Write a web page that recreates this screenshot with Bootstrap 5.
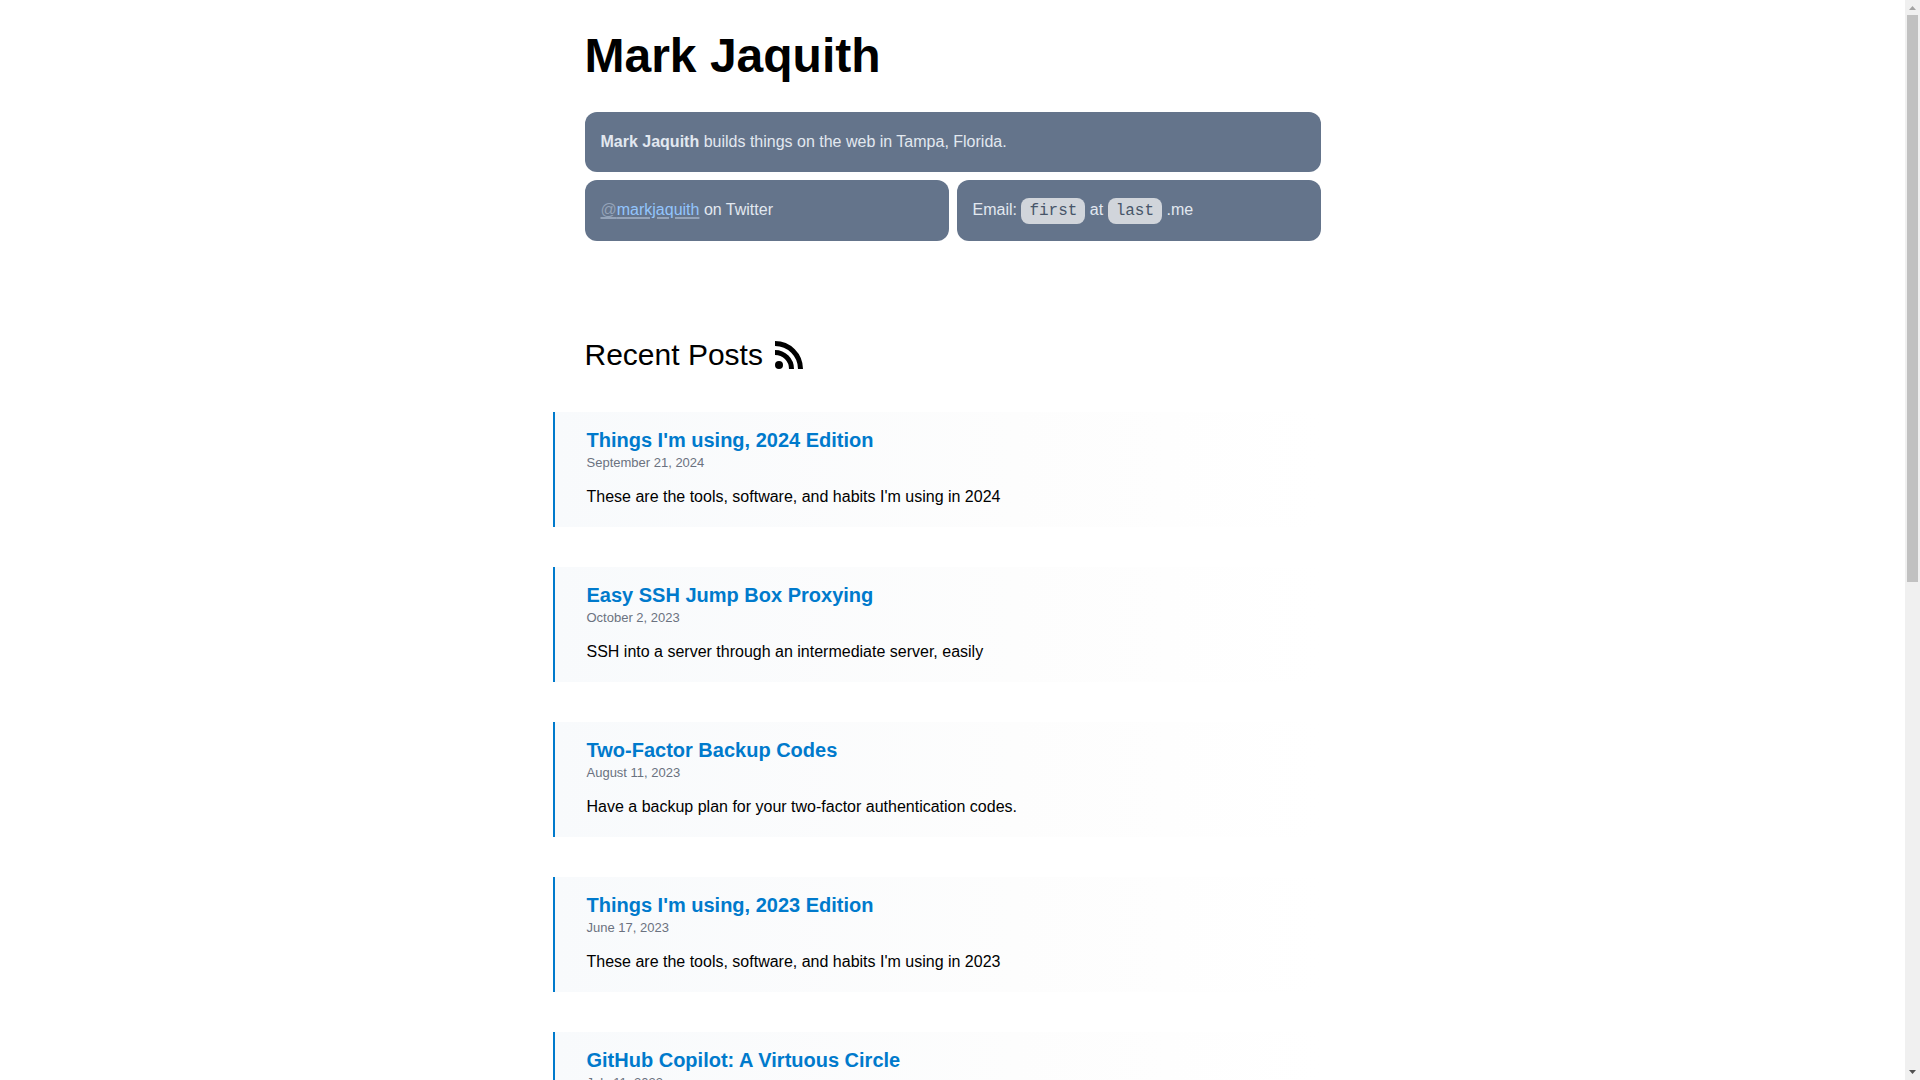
<!DOCTYPE html>
<html lang="en">
<head>
<meta charset="utf-8">
<meta name="viewport" content="width=device-width, initial-scale=1">
<title>Mark Jaquith</title>
<link href="https://cdn.jsdelivr.net/npm/bootstrap@5.3.0/dist/css/bootstrap.min.css" rel="stylesheet">
<style>
  body { font-family: "Liberation Sans", Arial, sans-serif; color: #000; background: #fff; }
  .page-column { max-width: 768px; padding: 0 16px; }
  .site-title { font-size: 48px; line-height: 48px; font-weight: 700; margin: 32px 0; }
  .bio-grid { display: grid; grid-template-columns: 1fr 1fr; grid-template-rows: 60px 61px; gap: 8px; margin-bottom: 96px; }
  .bio-tile { background: #64748b; color: #e2e8f0; border-radius: 12px; padding: 16px; line-height: 28px; }
  .bio-wide { grid-column: 1 / -1; }
  .handle { color: #93c5fd; text-decoration-color: #94a3b8; text-decoration-thickness: 2px; text-underline-offset: 2px; }
  .handle span { color: #94a3b8; }
  .bio-tile code { font: 16px/18px "Liberation Mono", monospace; color: #475569; background: #d1d5db; border-radius: 8px; padding: 4px 8px; }
  .section-title { font-size: 30px; line-height: 36px; gap: 12px; margin-bottom: 39px; }
  .post-item { margin-left: -32px; border-left: 2px solid #007acc; padding: 16px 32px; background: linear-gradient(to right, #f8fafc, #fdfdfd 60%, #fff); margin-bottom: 40px; }
  .post-item h3 { font-size: 20px; line-height: 25px; font-weight: 700; margin: 0; }
  .post-item h3 a { color: #007acc; }
  .post-item time { font-size: 13px; line-height: 20px; color: #6b7280; }
  .post-item p { line-height: 28px; margin: 10px 0 0; }
  .scroll-rail { width: 15px; background: #f0f0f0; }
  .scroll-thumb { width: 11px; height: 567px; background: #c1c1c1; }
</style>
<script src="https://cdn.jsdelivr.net/npm/bootstrap@5.3.0/dist/js/bootstrap.bundle.min.js"></script>
</head>
<body>
<div class="d-flex vh-100 overflow-hidden">
  <div class="flex-grow-1 overflow-hidden">
    <div class="page-column mx-auto">
      <header>
        <h1 class="site-title">Mark Jaquith</h1>
        <div class="bio-grid">
          <div class="bio-tile bio-wide"><strong>Mark Jaquith</strong> builds things on the web in Tampa, Florida.</div>
          <div class="bio-tile"><a class="handle" href="#"><span>@</span>markjaquith</a> on Twitter</div>
          <div class="bio-tile">Email: <code>first</code> at <code>last</code> .me</div>
        </div>
      </header>
      <main>
        <h2 class="section-title d-flex align-items-center fw-normal">Recent Posts
          <a class="d-flex text-black" href="#" aria-label="RSS feed">
            <svg width="28" height="28" viewBox="0 0 28 28" fill="none" stroke="currentColor" stroke-width="5" aria-hidden="true"><circle cx="4" cy="24" r="4" fill="currentColor" stroke="none"/><path d="M0 11.5A16.5 16.5 0 0 1 16.5 28M0 2.5A25.5 25.5 0 0 1 25.5 28"/></svg>
          </a>
        </h2>
        <article class="post-item">
          <h3><a class="text-decoration-none" href="#">Things I'm using, 2024 Edition</a></h3>
          <time class="d-block" datetime="2024-09-21">September 21, 2024</time>
          <p>These are the tools, software, and habits I'm using in 2024</p>
        </article>
        <article class="post-item">
          <h3><a class="text-decoration-none" href="#">Easy SSH Jump Box Proxying</a></h3>
          <time class="d-block" datetime="2023-10-02">October 2, 2023</time>
          <p>SSH into a server through an intermediate server, easily</p>
        </article>
        <article class="post-item">
          <h3><a class="text-decoration-none" href="#">Two-Factor Backup Codes</a></h3>
          <time class="d-block" datetime="2023-08-11">August 11, 2023</time>
          <p>Have a backup plan for your two-factor authentication codes.</p>
        </article>
        <article class="post-item">
          <h3><a class="text-decoration-none" href="#">Things I'm using, 2023 Edition</a></h3>
          <time class="d-block" datetime="2023-06-17">June 17, 2023</time>
          <p>These are the tools, software, and habits I'm using in 2023</p>
        </article>
        <article class="post-item">
          <h3><a class="text-decoration-none" href="#">GitHub Copilot: A Virtuous Circle</a></h3>
          <time class="d-block" datetime="2022-07-11">July 11, 2022</time>
        </article>
      </main>
    </div>
  </div>
  <div class="scroll-rail d-flex flex-column align-items-center flex-shrink-0" aria-hidden="true">
    <svg width="15" height="15" viewBox="0 0 15 15"><path d="M4 10h7L7.500 6z" fill="#a3a3a3"/></svg>
    <div class="scroll-thumb"></div>
    <svg class="mt-auto" width="15" height="15" viewBox="0 0 15 15"><path d="M4 5h7L7.500 9z" fill="#505050"/></svg>
  </div>
</div>
</body>
</html>
